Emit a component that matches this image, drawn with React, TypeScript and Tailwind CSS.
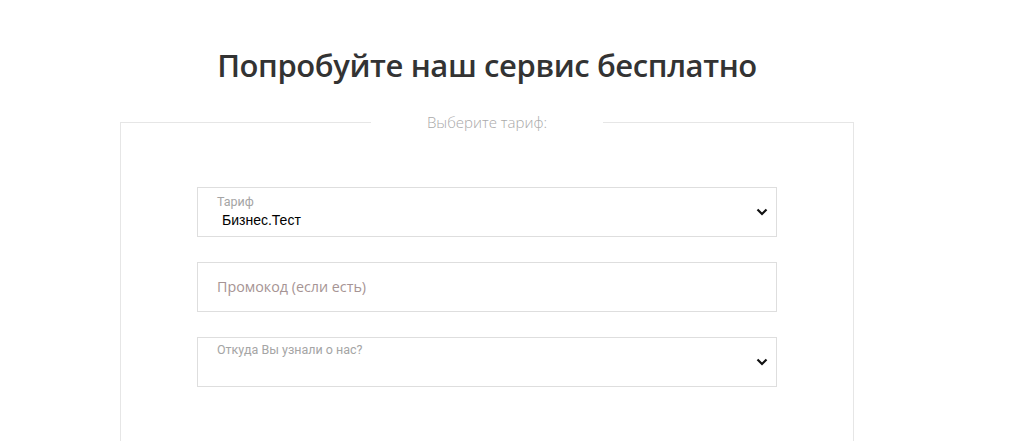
import React from "react";

function Chevron() {
  return (
    <svg width="12" height="8" viewBox="0 0 12 8" className="shrink-0">
      <path d="M1.5 1.5 L6 6 L10.5 1.5" fill="none" stroke="#111" strokeWidth="2.2" />
    </svg>
  );
}

export default function App() {
  return (
    <div className="min-h-screen bg-white" style={{ fontFamily: '"Open Sans", "Noto Sans", sans-serif' }}>
      <div className="ml-[120px] w-[734px] pt-[42px]">
        <h1 className="text-center text-[31px] leading-[46px] font-semibold tracking-[-0.4px] text-[#333]">
          Попробуйте наш сервис бесплатно
        </h1>

        <fieldset className="mt-[24px] border border-[#e6e6e6] pb-[60px]">
          <legend className="mx-auto px-[56px] text-[15px] leading-[20px] font-light text-[#a9a9a9]">
            Выберите тариф:
          </legend>

          <div className="mx-[76px] mt-[55px] flex flex-col gap-[25px]">
            <div className="flex h-[50px] items-center border border-[#dedede] pl-[19px] pr-[8px]">
              <div className="flex-1">
                <div className="text-[12.5px] leading-[14px] text-[#a5a5a5]" style={{ fontFamily: "Roboto, sans-serif" }}>Тариф</div>
                <div className="mt-[3px] pl-[5px] text-[14px] leading-[17px] text-black" style={{ fontFamily: '"Liberation Sans", Arial, sans-serif' }}>
                  Бизнес.Тест
                </div>
              </div>
              <Chevron />
            </div>

            <div className="flex h-[50px] items-center border border-[#dedede] pl-[19px]">
              <span className="text-[14.3px] text-[#a69494]">Промокод (если есть)</span>
            </div>

            <div className="flex h-[50px] items-start border border-[#dedede] pl-[19px] pr-[8px] pt-[5px]">
              <div className="flex-1 text-[12.5px] leading-[14px] text-[#a5a5a5]" style={{ fontFamily: "Roboto, sans-serif" }}>
                Откуда Вы узнали о нас?
              </div>
              <div className="mt-[15px]">
                <Chevron />
              </div>
            </div>
          </div>
        </fieldset>
      </div>
    </div>
  );
}
